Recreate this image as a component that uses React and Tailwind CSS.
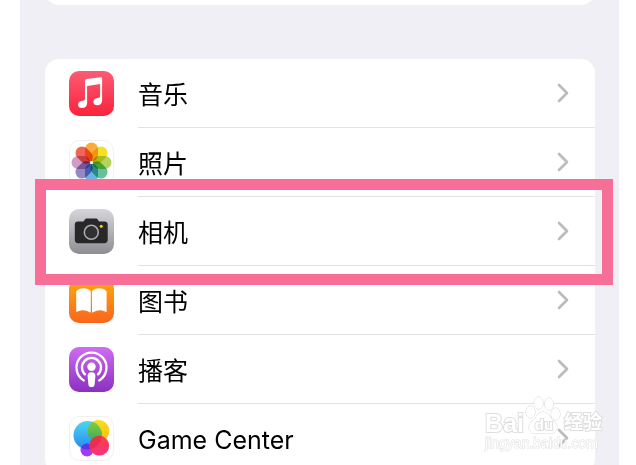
import { ChevronRight } from 'lucide-react'

const MusicIcon = () => (
  <svg viewBox="0 0 45 45" className="size-full">
    <defs>
      <linearGradient id="music" x1="0" y1="0" x2="0" y2="1">
        <stop offset="0" stopColor="#fb5b74" />
        <stop offset="1" stopColor="#fa233b" />
      </linearGradient>
    </defs>
    <rect width="45" height="45" rx="10" fill="url(#music)" />
    <path
      fill="#fff"
      d="M16 10.2c0-1.200.5-1.900 1.700-2.100L31.600 6.200c1-.1 1.500.3 1.500 1.300V29.500c0 3-1.900 4.700-4.900 4.700-2.300 0-3.800-1.300-3.800-3.300 0-2.300 1.600-3.600 4.300-4 1.800-.2 2.400-.5 2.400-2V12.900L18.100 15.100V32.200c0 3-2 4.800-5.200 4.800-2.300 0-3.900-1.300-3.900-3.300 0-2.300 1.700-3.600 4.400-4 1.900-.2 2.600-.6 2.600-2.100Z"
    />
  </svg>
)

const PETALS = ['#f9a11b', '#f3dc0b', '#a9d047', '#4fb98b', '#5aa7e0', '#8577bd', '#c98fc0', '#f0503f']

const PhotosIcon = () => (
  <svg viewBox="0 0 45 45" className="size-full">
    <rect x="0.5" y="0.5" width="44" height="44" rx="10" fill="#fff" stroke="#f0f0f0" />
    <g className="isolate">
      {PETALS.map((color, i) => (
        <rect
          key={color}
          x="16"
          y="2.5"
          width="13"
          height="19"
          rx="6.5"
          fill={color}
          opacity="0.88"
          transform={`rotate(${i * 45} 22.5 22.5)`}
          className="mix-blend-multiply"
        />
      ))}
    </g>
    <circle cx="22.5" cy="22.5" r="1.5" fill="#fff" />
  </svg>
)

const CameraIcon = () => (
  <svg viewBox="0 0 45 45" className="size-full">
    <defs>
      <linearGradient id="camera" x1="0" y1="0" x2="0" y2="1">
        <stop offset="0" stopColor="#d6d5da" />
        <stop offset="1" stopColor="#8f8e94" />
      </linearGradient>
    </defs>
    <rect width="45" height="45" rx="10" fill="url(#camera)" />
    <path
      fill="#28282a"
      d="M9 12.600h4.300c1 0 1.500-.3 2-1.200.7-1.400 1.300-2 2.700-2h8.600c1.400 0 2 .6 2.700 2 .5.9 1 1.200 2 1.200h4.200c2 0 3.200 1.200 3.200 3.200v15.300c0 2-1.200 3.200-3.200 3.200H9c-2 0-3.200-1.200-3.200-3.200V15.800c0-2 1.200-3.200 3.200-3.200Z"
    />
    <circle cx="22.3" cy="23.3" r="7" fill="#303032" stroke="#a9a8ad" strokeWidth="1.6" />
    <circle cx="32.2" cy="17.3" r="1.5" fill="#fbd20b" />
  </svg>
)

const BooksIcon = () => (
  <svg viewBox="0 0 45 45" className="size-full">
    <defs>
      <linearGradient id="books" x1="0" y1="0" x2="0" y2="1">
        <stop offset="0" stopColor="#ffab0c" />
        <stop offset="1" stopColor="#f9651c" />
      </linearGradient>
    </defs>
    <rect width="45" height="45" rx="10" fill="url(#books)" />
    <path
      fill="#fff"
      d="M21.800 13.300c-1.700-2-4.100-3-7-3-2.700 0-5 .7-6.800 2.100-.5.4-.8.9-.8 1.500v19.300c0 .7.500.9 1.100.5 1.700-1 3.600-1.500 5.700-1.500 2.400 0 4.500.7 6.600 2.100.7.500 1.200.2 1.200-.6ZM23 13.300c1.700-2 4.100-3 7-3 2.700 0 5 .7 6.800 2.100.5.4.8.9.8 1.500v19.300c0 .7-.5.9-1.100.5-1.700-1-3.600-1.500-5.700-1.500-2.400 0-4.500.7-6.600 2.100-.7.500-1.200.2-1.200-.6Z"
    />
  </svg>
)

const PodcastsIcon = () => (
  <svg viewBox="0 0 45 45" className="size-full">
    <defs>
      <linearGradient id="podcasts" x1="0" y1="0" x2="0" y2="1">
        <stop offset="0" stopColor="#cf6cf2" />
        <stop offset="1" stopColor="#8a30c0" />
      </linearGradient>
    </defs>
    <rect width="45" height="45" rx="10" fill="url(#podcasts)" />
    <g fill="none" stroke="#fff" strokeWidth="2.3" strokeLinecap="round">
      <path d="M14.800 33.400A15 15 0 1 1 30.200 33.400" />
      <path d="M16 27.400A9.500 9.500 0 1 1 29 27.400" />
    </g>
    <circle cx="22.5" cy="19.8" r="4.2" fill="#fff" />
    <path
      fill="#fff"
      d="M22.500 25.200c2.700 0 4.100 1.300 3.900 3.800l-.8 8.400c-.2 1.800-1.300 2.700-3.100 2.700s-2.900-.9-3.100-2.700l-.8-8.400c-.2-2.500 1.200-3.800 3.900-3.800Z"
    />
  </svg>
)

const GameCenterIcon = () => (
  <svg viewBox="0 0 45 45" className="size-full">
    <defs>
      <linearGradient id="gcBlue" x1="0" y1="0" x2="0" y2="1">
        <stop offset="0" stopColor="#4fd5f0" />
        <stop offset="1" stopColor="#2489f0" />
      </linearGradient>
      <linearGradient id="gcYellow" x1="0" y1="0" x2="0" y2="1">
        <stop offset="0" stopColor="#f6e11b" />
        <stop offset="1" stopColor="#fdb813" />
      </linearGradient>
      <linearGradient id="gcGreen" x1="0" y1="0" x2="0" y2="1">
        <stop offset="0" stopColor="#8ed03c" />
        <stop offset="1" stopColor="#35ab5c" />
      </linearGradient>
      <linearGradient id="gcRed" x1="0" y1="0" x2="0" y2="1">
        <stop offset="0" stopColor="#f8433f" />
        <stop offset="1" stopColor="#fb2f83" />
      </linearGradient>
      <clipPath id="gcClip">
        <circle cx="18.7" cy="19.3" r="14.2" />
      </clipPath>
    </defs>
    <rect x="0.5" y="0.5" width="44" height="44" rx="10" fill="#fff" stroke="#f0f0f0" />
    <circle cx="18" cy="34" r="6.5" fill="#a13af0" />
    <circle cx="29.5" cy="14.8" r="10.8" fill="url(#gcYellow)" />
    <circle cx="18.7" cy="19.3" r="14.2" fill="url(#gcBlue)" />
    <circle cx="18" cy="34" r="6.5" fill="#5b35e8" clipPath="url(#gcClip)" />
    <circle cx="29.5" cy="14.8" r="10.8" fill="url(#gcGreen)" clipPath="url(#gcClip)" />
    <circle cx="30.3" cy="29.7" r="9.9" fill="url(#gcRed)" />
    <circle cx="30.3" cy="29.7" r="9.9" fill="#e0274c" opacity="0.6" clipPath="url(#gcClip)" />
  </svg>
)

const APPS = [
  { name: '音乐', icon: MusicIcon },
  { name: '照片', icon: PhotosIcon },
  { name: '相机', icon: CameraIcon, highlighted: true },
  { name: '图书', icon: BooksIcon },
  { name: '播客', icon: PodcastsIcon },
  { name: 'Game Center', icon: GameCenterIcon }
]

function AppRow({ app }) {
  const Icon = app.icon
  return (
    <li className="relative">
      <a href="#" className="flex items-center gap-6 pl-6">
        <span className="size-[45px] shrink-0">
          <Icon />
        </span>
        <span className="flex h-[69px] flex-1 items-center justify-between border-b border-[#e2e2e4] pr-4 text-black">
          <span className="pt-1 text-[25px] leading-8">{app.name}</span>
          <ChevronRight className="size-8 text-[#bcbcbe]" strokeWidth={2} />
        </span>
      </a>
      {app.highlighted && (
        <div className="pointer-events-none absolute -top-[18px] -right-[18px] -bottom-[19px] -left-[10px] z-10 border-[11px] border-[#f76f96]" />
      )}
    </li>
  )
}

function Watermark() {
  return (
    <div className="pointer-events-none absolute right-[34px] bottom-[14px] z-20 font-['Liberation_Sans','Noto_Sans_CJK_SC',sans-serif] text-white">
      <div className="flex items-end gap-1 font-bold [paint-order:stroke] [-webkit-text-stroke:2px_#dededf]">
        <span className="text-[25px] leading-6">Bai</span>
        <span className="relative flex h-9 w-8 items-end justify-center">
          <svg viewBox="0 0 32 36" className="absolute inset-0 size-full overflow-visible" fill="#fff" stroke="#d4d4d6">
            <ellipse cx="2.5" cy="13" rx="4.5" ry="6" />
            <ellipse cx="10.5" cy="4" rx="4.5" ry="6" />
            <ellipse cx="21" cy="5" rx="4.5" ry="6" />
            <ellipse cx="27.5" cy="15" rx="4.500" ry="6" />
            <path d="M15 13c3 0 5 2 7 5 2.500 3.500 7 6 7 10.500 0 4-3 6-7 6H8c-4 0-7-2-7-6C1 24 5.500 21.500 8 18c2-3 4-5 7-5Z" />
          </svg>
          <span className="relative text-[15px] leading-5">du</span>
        </span>
        <span className="text-[19px] leading-6">经验</span>
      </div>
      <div className="text-[14px] leading-4 [paint-order:stroke] [-webkit-text-stroke:1px_#dededf]">jingyan.baidu.com</div>
    </div>
  )
}

export default function App() {
  return (
    <div className="relative h-screen overflow-hidden bg-white pr-[17px] pl-5 font-['Inter','Noto_Sans_CJK_SC',sans-serif]">
      <main className="flex h-full flex-col bg-[#f0eff5] pr-6 pl-[25px]">
        {/* tail of the previous group, scrolled off the top */}
        <div className="-mt-[35px] h-10 shrink-0 rounded-[14px] bg-white" />
        <ul className="mt-[54px] rounded-[14px] bg-white">
          {APPS.map(app => (
            <AppRow key={app.name} app={app} />
          ))}
        </ul>
      </main>
      <Watermark />
    </div>
  )
}
